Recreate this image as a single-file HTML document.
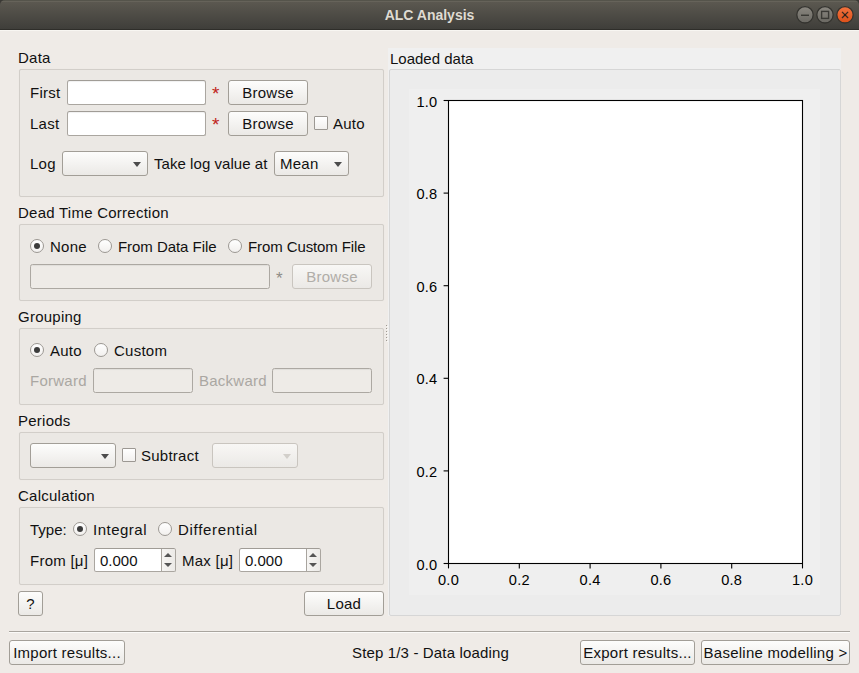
<!DOCTYPE html>
<html><head><meta charset="utf-8">
<style>
*{box-sizing:border-box;margin:0;padding:0}
html,body{width:859px;height:673px;overflow:hidden;background:#efebe7}
body{position:relative;font-family:"Liberation Sans",sans-serif;font-size:15px;color:#111;letter-spacing:0.25px}
.a{position:absolute}
.t{position:absolute;white-space:nowrap;line-height:15px;color:#111;margin-top:-1px}
#title{left:0;top:0;width:859px;height:30px;background:linear-gradient(#55544b 0,#55544b 1px,#66635a 1px,#66635a 2px,#5b5850 2px,#3f3e3a 29px);border-radius:5px 5px 0 0;border-bottom:1px solid #2f2e2a}
#tbg{left:0;top:0;width:859px;height:10px;background:#3a3935}
#thl{left:0;top:30px;width:859px;height:1px;background:#f8f6f2}
#title .tt{position:absolute;left:0;right:0;top:7px;text-align:center;font-weight:bold;font-size:14px;letter-spacing:0;color:#dfdbd2;line-height:16px}
.wb{position:absolute;top:6px;width:18px;height:18px;border-radius:50%;border:1px solid #35342f;background:linear-gradient(#7f7c75,#5c5a54)}
.grp{position:absolute;border:1px solid #d2cec9;border-radius:2px;background:#ebe8e4;box-shadow:0 0 1px rgba(0,0,0,.06)}
.edit{position:absolute;background:#fff;border:1px solid #aaa6a0;border-top-color:#a09c96;border-radius:2.5px;box-shadow:inset 0 1px 1px rgba(0,0,0,.06)}
.edit.dis{background:#eeebe7;border-color:#aca8a2}
.btn{position:absolute;border:1px solid #a29e97;border-radius:3px;background:linear-gradient(#fdfdfc,#ebe9e6);text-align:center;line-height:24px;color:#111;white-space:nowrap}
.btn.dis{color:#b0ada8;border-color:#c9c5bf;background:linear-gradient(#f8f7f5,#ebe9e6)}
.combo{position:absolute;border:1px solid #a29e97;border-radius:3px;background:linear-gradient(#fdfdfc,#ebe9e6);line-height:24px;color:#111;white-space:nowrap;padding-left:5px}
.combo.dis{border-color:#c9c5bf;background:linear-gradient(#f8f7f5,#ebe9e6)}
.arr{position:absolute;width:0;height:0;border-left:4.5px solid transparent;border-right:4.5px solid transparent;border-top:5px solid #4c4c4c}
.combo.dis .arr{border-top-color:#d2cfca}
.radio{position:absolute;width:14px;height:14px;border-radius:50%;border:1px solid #9c9893;background:linear-gradient(#fff,#f2f0ee)}
.radio.on::after{content:"";position:absolute;left:3px;top:3px;width:6px;height:6px;border-radius:50%;background:#3c3c3c}
.chk{position:absolute;width:14px;height:14px;border:1px solid #9c9893;border-radius:1px;background:linear-gradient(#fff,#f2f0ee)}
.star{position:absolute;color:#c0231a;font-size:19px;line-height:18px;letter-spacing:0}
.dtxt{color:#aaa7a2}
.spin{position:absolute;background:#fff;border:1px solid #aaa6a0;border-top-color:#a09c96;border-radius:2.5px;overflow:hidden}
.sb{position:absolute;right:0;top:0;width:14px;height:22px;border-left:1px solid #a8a49e;background:linear-gradient(90deg,#f6f5f3,#eceae7)}
.up,.dn{position:absolute;left:2px;width:0;height:0;border-left:4px solid transparent;border-right:4px solid transparent}
.up{top:4px;border-bottom:4px solid #555}
.dn{top:14px;border-top:4px solid #555}
</style></head><body>

<div id="tbg" class="a"></div><div id="thl" class="a"></div>
<div id="title" class="a"><div class="tt">ALC Analysis</div>
 <svg class="a" style="left:790px;top:0" width="69" height="30" viewBox="790 0 69 30">
  <defs>
   <linearGradient id="gg" x1="0" y1="0" x2="0" y2="1"><stop offset="0" stop-color="#8a8780"/><stop offset="1" stop-color="#6a6862"/></linearGradient>
   <linearGradient id="og" x1="0" y1="0" x2="0" y2="1"><stop offset="0" stop-color="#f3733f"/><stop offset="1" stop-color="#dd5019"/></linearGradient>
  </defs>
  <circle cx="805" cy="14.8" r="8.2" fill="url(#gg)" stroke="#34332f" stroke-width="1.3"/>
  <rect x="801" y="14.6" width="8" height="1.3" fill="#34332f"/>
  <circle cx="825" cy="14.8" r="8.2" fill="url(#gg)" stroke="#34332f" stroke-width="1.3"/>
  <rect x="821.6" y="11.4" width="7" height="7" fill="none" stroke="#3a3935" stroke-width="1.4"/>
  <circle cx="845" cy="14.8" r="8.2" fill="url(#og)" stroke="#34332f" stroke-width="1.3"/>
  <path d="M842 11.9 L848.1 18 M848.1 11.9 L842 18" stroke="#3a2a20" stroke-width="1.3"/>
  <circle cx="845" cy="14.9" r="1" fill="#2a1e16"/>
 </svg>
</div>

<!-- Data -->
<div class="t" style="left:18px;top:51px">Data</div>
<div class="grp" style="left:19px;top:69px;width:365px;height:128px"></div>
<div class="t" style="left:30px;top:86px">First</div>
<div class="edit" style="left:67px;top:80px;width:139px;height:25px"></div>
<div class="star" style="left:212px;top:85px">*</div>
<div class="btn" style="left:228px;top:80px;width:80px;height:25px">Browse</div>
<div class="t" style="left:30px;top:117px">Last</div>
<div class="edit" style="left:67px;top:111px;width:139px;height:25px"></div>
<div class="star" style="left:212px;top:116px">*</div>
<div class="btn" style="left:228px;top:111px;width:80px;height:25px">Browse</div>
<div class="chk" style="left:314px;top:116px"></div>
<div class="t" style="left:333px;top:117px">Auto</div>
<div class="t" style="left:30px;top:157px">Log</div>
<div class="combo" style="left:62px;top:151px;width:86px;height:25px"><div class="arr" style="left:70px;top:10px"></div></div>
<div class="t" style="left:154px;top:157px;letter-spacing:0.05px">Take log value at</div>
<div class="combo" style="left:274px;top:151px;width:75px;height:25px">Mean<div class="arr" style="left:59px;top:10px"></div></div>

<!-- Dead time -->
<div class="t" style="left:18px;top:206px">Dead Time Correction</div>
<div class="grp" style="left:19px;top:224px;width:365px;height:77px"></div>
<div class="radio on" style="left:30px;top:239px"></div>
<div class="t" style="left:50px;top:240px">None</div>
<div class="radio" style="left:98px;top:239px"></div>
<div class="t" style="left:118px;top:240px;letter-spacing:-0.05px">From Data File</div>
<div class="radio" style="left:228px;top:239px"></div>
<div class="t" style="left:248px;top:240px;letter-spacing:-0.1px">From Custom File</div>
<div class="edit dis" style="left:30px;top:264px;width:240px;height:25px"></div>
<div class="star" style="left:276px;top:270px;color:#8f8c87;font-size:17px">*</div>
<div class="btn dis" style="left:292px;top:264px;width:80px;height:25px">Browse</div>

<!-- Grouping -->
<div class="t" style="left:18px;top:310px">Grouping</div>
<div class="grp" style="left:19px;top:328px;width:365px;height:77px"></div>
<div class="radio on" style="left:30px;top:343px"></div>
<div class="t" style="left:50px;top:344px">Auto</div>
<div class="radio" style="left:94px;top:343px"></div>
<div class="t" style="left:114px;top:344px">Custom</div>
<div class="t dtxt" style="left:30px;top:374px">Forward</div>
<div class="edit dis" style="left:93px;top:368px;width:100px;height:25px"></div>
<div class="t dtxt" style="left:199px;top:374px">Backward</div>
<div class="edit dis" style="left:272px;top:368px;width:100px;height:25px"></div>

<!-- Periods -->
<div class="t" style="left:18px;top:414px">Periods</div>
<div class="grp" style="left:19px;top:432px;width:365px;height:48px"></div>
<div class="combo" style="left:30px;top:443px;width:86px;height:25px"><div class="arr" style="left:70px;top:10px"></div></div>
<div class="chk" style="left:122px;top:448px"></div>
<div class="t" style="left:141px;top:449px">Subtract</div>
<div class="combo dis" style="left:212px;top:443px;width:86px;height:25px"><div class="arr" style="left:70px;top:10px"></div></div>

<!-- Calculation -->
<div class="t" style="left:18px;top:489px">Calculation</div>
<div class="grp" style="left:19px;top:507px;width:365px;height:78px"></div>
<div class="t" style="left:30px;top:523px;letter-spacing:0">Type:</div>
<div class="radio on" style="left:73px;top:522px"></div>
<div class="t" style="left:93px;top:523px;letter-spacing:0.5px">Integral</div>
<div class="radio" style="left:158px;top:522px"></div>
<div class="t" style="left:178px;top:523px;letter-spacing:0.7px">Differential</div>
<div class="t" style="left:30px;top:554px">From [μ]</div>
<div class="spin" style="left:94px;top:548px;width:82px;height:24px"><div class="sb"><div class="up"></div><div class="dn"></div></div></div>
<div class="t" style="left:100px;top:554px;letter-spacing:0">0.000</div>
<div class="t" style="left:182px;top:554px">Max [μ]</div>
<div class="spin" style="left:239px;top:548px;width:82px;height:24px"><div class="sb"><div class="up"></div><div class="dn"></div></div></div>
<div class="t" style="left:245px;top:554px;letter-spacing:0">0.000</div>

<div class="btn" style="left:18px;top:591px;width:25px;height:25px">?</div>
<div class="btn" style="left:304px;top:591px;width:80px;height:25px">Load</div>

<!-- splitter -->
<div class="a" style="left:386px;top:325px;width:1px;height:1px;background:#9d9992;box-shadow:1px 1px 0 #fbfaf8"></div><div class="a" style="left:386px;top:328px;width:1px;height:1px;background:#9d9992;box-shadow:1px 1px 0 #fbfaf8"></div><div class="a" style="left:386px;top:331px;width:1px;height:1px;background:#9d9992;box-shadow:1px 1px 0 #fbfaf8"></div><div class="a" style="left:386px;top:334px;width:1px;height:1px;background:#9d9992;box-shadow:1px 1px 0 #fbfaf8"></div><div class="a" style="left:386px;top:337px;width:1px;height:1px;background:#9d9992;box-shadow:1px 1px 0 #fbfaf8"></div><div class="a" style="left:386px;top:340px;width:1px;height:1px;background:#9d9992;box-shadow:1px 1px 0 #fbfaf8"></div>
<!-- Right panel -->
<div class="a" style="left:388px;top:48px;width:453px;height:568px;background:#f0f0f0"></div>
<div class="t" style="left:390px;top:52px;letter-spacing:0">Loaded data</div>
<div class="a" style="left:389px;top:69px;width:452px;height:547px;background:#ececec;border:1px solid #d6d6d6;border-radius:2px"></div>
<div class="a" style="left:409px;top:89px;width:411px;height:506px;background:#efefef"></div>
<svg class="a" font-family="Liberation Sans" font-size="14.6" fill="#000" style="left:0;top:0" width="859" height="673" viewBox="0 0 859 673">
<rect x="448.5" y="100.5" width="354" height="463" fill="#fff" stroke="#000" stroke-width="1.1"/>
<line x1="443.6" y1="563.50" x2="448.5" y2="563.50" stroke="#000" stroke-width="1.1"/>
<text x="437.5" y="569.60" text-anchor="end">0.0</text>
<line x1="448.50" y1="563.5" x2="448.50" y2="568.4" stroke="#000" stroke-width="1.1"/>
<text x="448.50" y="585.3" text-anchor="middle">0.0</text>
<line x1="443.6" y1="470.90" x2="448.5" y2="470.90" stroke="#000" stroke-width="1.1"/>
<text x="437.5" y="477.00" text-anchor="end">0.2</text>
<line x1="519.30" y1="563.5" x2="519.30" y2="568.4" stroke="#000" stroke-width="1.1"/>
<text x="519.30" y="585.3" text-anchor="middle">0.2</text>
<line x1="443.6" y1="378.30" x2="448.5" y2="378.30" stroke="#000" stroke-width="1.1"/>
<text x="437.5" y="384.40" text-anchor="end">0.4</text>
<line x1="590.10" y1="563.5" x2="590.10" y2="568.4" stroke="#000" stroke-width="1.1"/>
<text x="590.10" y="585.3" text-anchor="middle">0.4</text>
<line x1="443.6" y1="285.70" x2="448.5" y2="285.70" stroke="#000" stroke-width="1.1"/>
<text x="437.5" y="291.80" text-anchor="end">0.6</text>
<line x1="660.90" y1="563.5" x2="660.90" y2="568.4" stroke="#000" stroke-width="1.1"/>
<text x="660.90" y="585.3" text-anchor="middle">0.6</text>
<line x1="443.6" y1="193.10" x2="448.5" y2="193.10" stroke="#000" stroke-width="1.1"/>
<text x="437.5" y="199.20" text-anchor="end">0.8</text>
<line x1="731.70" y1="563.5" x2="731.70" y2="568.4" stroke="#000" stroke-width="1.1"/>
<text x="731.70" y="585.3" text-anchor="middle">0.8</text>
<line x1="443.6" y1="100.50" x2="448.5" y2="100.50" stroke="#000" stroke-width="1.1"/>
<text x="437.5" y="106.60" text-anchor="end">1.0</text>
<line x1="802.50" y1="563.5" x2="802.50" y2="568.4" stroke="#000" stroke-width="1.1"/>
<text x="802.50" y="585.3" text-anchor="middle">1.0</text>
</svg>

<!-- bottom -->
<div class="a" style="left:9px;top:631px;width:841px;height:1px;background:#a9a59f;box-shadow:0 1px 0 #fbfaf8"></div>
<div class="btn" style="left:9px;top:640px;width:116px;height:25px">Import results...</div>
<div class="t" style="left:352px;top:646px;letter-spacing:0.15px">Step 1/3 - Data loading</div>
<div class="btn" style="left:580px;top:640px;width:115px;height:25px">Export results...</div>
<div class="btn" style="left:701px;top:640px;width:149px;height:25px">Baseline modelling &gt;</div>

</body></html>
